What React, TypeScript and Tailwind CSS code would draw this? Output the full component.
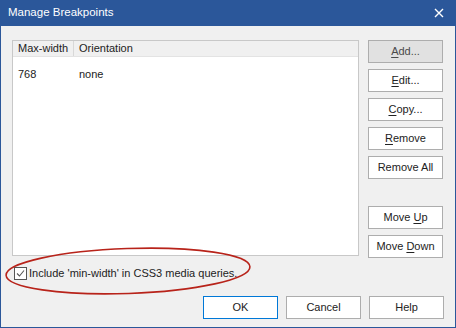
import React from "react";

const font = { fontFamily: '"Liberation Sans", Arial, sans-serif' };

function Btn({ children, primary, dim }: { children: React.ReactNode; primary?: boolean; dim?: boolean }) {
    return (
        <div
            className={
                "w-[75px] h-[23px] flex items-center justify-center text-[11px] leading-none whitespace-nowrap " +
                (primary
                    ? "border border-[#0078d7] bg-white text-[#222]"
                    : dim
                    ? "border border-[#adadad] bg-[#e1e1e1] text-[#4a4a4a]"
                    : "border border-[#adadad] bg-white text-[#222]")
            }
        >
            <span>{children}</span>
        </div>
    );
}

const U = ({ c }: { c: string }) => <span className="underline underline-offset-2">{c}</span>;

export default function App() {
    return (
        <div style={font} className="relative w-[456px] h-[328px] flex flex-col border border-[#2b579a] bg-[#f0f0f0] select-none whitespace-nowrap">
            {/* title bar */}
            <div className="h-[26px] -mt-px shrink-0 bg-[#2b579a] flex items-center justify-between pl-[7px] pr-[11px] text-white text-[11.5px]">
                <span>Manage Breakpoints</span>
                <svg width="10" height="10" viewBox="0 0 10 10">
                    <path d="M1 1 L9 9 M9 1 L1 9" stroke="white" strokeWidth="1.4" />
                </svg>
            </div>

            <div className="flex-1 flex flex-col px-[11px] pt-[14px]">
                <div className="flex gap-[9px]">
                    {/* list */}
                    <div className="w-[347px] h-[216px] border border-[#c8c8c8] bg-white text-[11px] text-[#222]">
                        <div className="flex h-[16px] bg-[#f0f0f0] border-b border-[#e3e3e3] items-center">
                            <div className="w-[61px] h-full border-r border-[#d8d8d8] flex items-center pl-[5px]">Max-width</div>
                            <div className="pl-[5px]">Orientation</div>
                        </div>
                        <div className="flex h-[18px] mt-[8px] items-center">
                            <div className="w-[61px] pl-[5px]">768</div>
                            <div className="pl-[5px]">none</div>
                        </div>
                    </div>
                    {/* side buttons */}
                    <div className="flex flex-col">
                        <div className="flex flex-col gap-[6px]">
                            <Btn dim><U c="A" />dd...</Btn>
                            <Btn><U c="E" />dit...</Btn>
                            <Btn><U c="C" />opy...</Btn>
                            <Btn><U c="R" />emove</Btn>
                            <Btn>Remove All</Btn>
                        </div>
                        <div className="flex flex-col gap-[6px] mt-[27px]">
                            <Btn>Move <U c="U" />p</Btn>
                            <Btn>Move <U c="D" />own</Btn>
                        </div>
                    </div>
                </div>

                {/* checkbox row */}
                <div className="flex h-[16px] items-center gap-[2px] mt-[7px] pl-[2px] text-[11px] leading-none text-[#222]">
                    <div className="w-[13px] h-[13px] border border-[#555] bg-white flex items-center justify-center">
                        <svg width="9" height="9" viewBox="0 0 9 9">
                            <path d="M1 4.5 L3.5 7 L8 1.5" fill="none" stroke="#555" strokeWidth="1.1" />
                        </svg>
                    </div>
                    <span>Include 'min-width' in CSS3 media queries.</span>
                </div>

                {/* bottom buttons */}
                <div className="flex justify-end gap-[8px] mt-[15px]">
                    <Btn primary>OK</Btn>
                    <Btn>Cancel</Btn>
                    <Btn>Help</Btn>
                </div>
            </div>

            {/* red annotation ellipse */}
            <svg className="absolute left-0 top-[240px] pointer-events-none" width="260" height="60" viewBox="0 0 260 60">
                <ellipse cx="127" cy="30" rx="122" ry="22.5" transform="rotate(-2 127 30)" fill="none" stroke="#b8231a" strokeWidth="1.6" />
            </svg>
        </div>
    );
}
